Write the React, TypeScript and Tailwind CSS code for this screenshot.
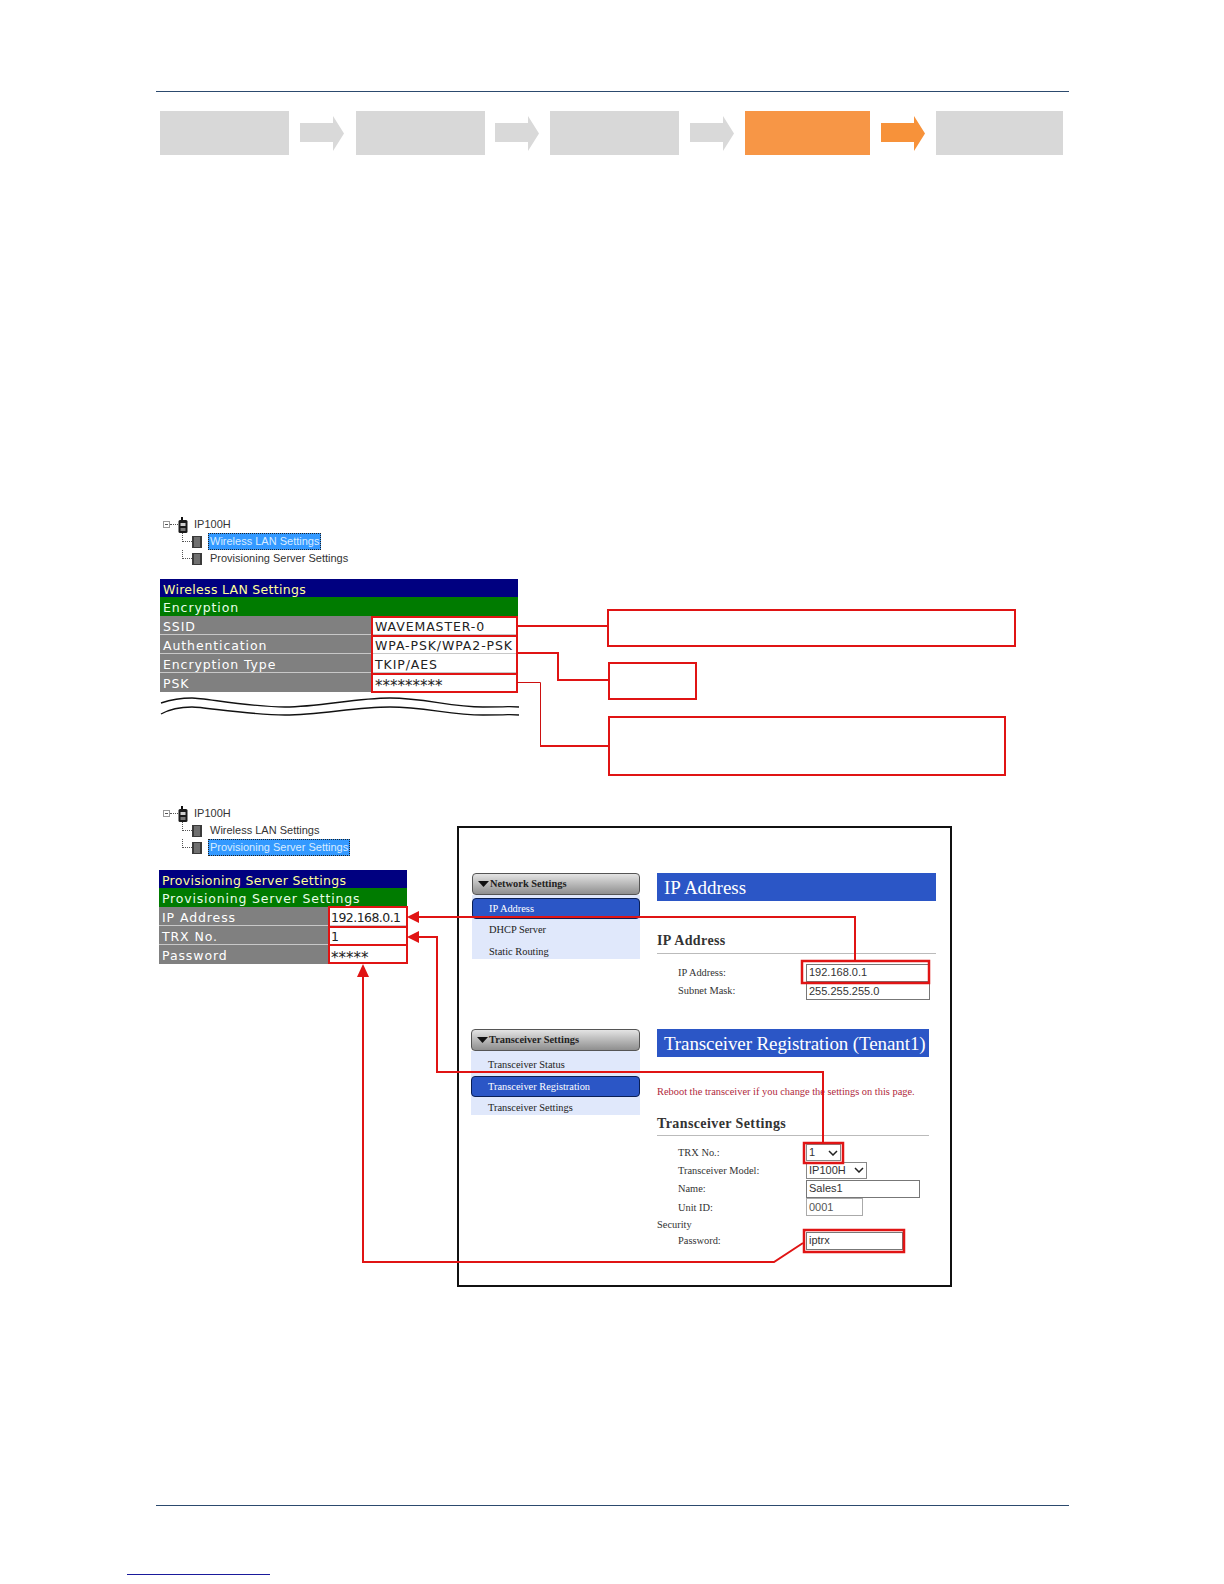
import React from "react";

const serif = "font-['Liberation_Serif',serif]";
const sans = "font-['Liberation_Sans',sans-serif]";

function StepArrow({ color }: { color: string }) {
  return (
    <svg width="44" height="35" viewBox="0 0 44 35" className="shrink-0">
      <path d="M0 7H33V0L44 17.5L33 35V26H0Z" fill={color} />
    </svg>
  );
}

function Radio() {
  return (
    <svg width="10" height="16" viewBox="0 0 10 16" className="shrink-0">
      <rect x="3" y="0" width="2" height="4" fill="#111" />
      <rect x="0.5" y="3" width="9" height="13" rx="1.5" fill="#1a1a1a" />
      <rect x="2.5" y="6" width="5" height="3" fill="#cfcfcf" />
      <rect x="2.5" y="11" width="5" height="3" fill="#777" />
    </svg>
  );
}

function Doc() {
  return (
    <svg width="10" height="12" viewBox="0 0 10 12" className="shrink-0">
      <rect width="10" height="12" fill="#3a3a3a" />
      <path d="M2 2H8M2 4H8M2 6H8M2 8H8M2 10H8" stroke="#a5a5a5" strokeWidth="1" />
    </svg>
  );
}

function TreeRow({ label, selected }: { label: string; selected: boolean }) {
  return (
    <div className="flex h-[17px] items-center pl-[23px]">
      <div className="h-[9px] w-[10px] self-start border-b border-l border-dotted border-[#555]" />
      <Doc />
      <span
        className={
          selected
            ? "ml-[6px] flex h-[17px] items-center border border-dotted border-[#222] bg-[#3399ff] px-[1px] text-[#d8ecff]"
            : "ml-[8px] text-[#333]"
        }
      >
        {label}
      </span>
    </div>
  );
}

function Tree({ selected }: { selected: 0 | 1 }) {
  return (
    <div className={`${sans} text-[11px] leading-none`}>
      <div className="flex h-[17px] items-center pl-[4px]">
        <div className="flex h-[7px] w-[7px] items-center justify-center border border-[#999]">
          <div className="h-px w-[3px] bg-[#555]" />
        </div>
        <div className="h-0 w-[8px] border-t border-dotted border-[#555]" />
        <Radio />
        <span className="ml-[6px] text-[#333]">IP100H</span>
      </div>
      <TreeRow label="Wireless LAN Settings" selected={selected === 0} />
      <TreeRow label="Provisioning Server Settings" selected={selected === 1} />
    </div>
  );
}

type Row = { label: string; value: string };

function DeviceTable({
  title,
  group,
  rows,
  width,
  labelWidth,
  valueTracking,
  groupTracking,
}: {
  title: string;
  group: string;
  rows: Row[];
  width: string;
  labelWidth: string;
  valueTracking: string;
  groupTracking: string;
}) {
  return (
    <div className={`${width} font-['DejaVu_Sans',sans-serif] text-[12.5px] leading-none`}>
      <div className="flex h-[18px] items-center bg-[#000080] pt-[4px] pl-[3px] font-medium tracking-[0.3px] text-[#ffff99]">
        {title}
      </div>
      <div className={`flex h-[19px] items-center bg-[#007b00] pt-[4px] pl-[3px] ${groupTracking} text-[#e8ffe8]`}>
        {group}
      </div>
      {rows.map((r) => (
        <div key={r.label} className="flex h-[19px] border-b border-[#c8c8c8] last:border-b-0">
          <div className={`flex ${labelWidth} items-center bg-[#808080] pt-[4px] pl-[3px] tracking-[0.9px] text-white`}>
            {r.label}
          </div>
          {r.value.startsWith("*") ? (
            <div className="flex flex-1 items-center bg-white pt-[8px] pl-[3px] text-[15px] text-[#222]">{r.value}</div>
          ) : (
            <div className={`flex flex-1 items-center bg-white pt-[4px] pl-[3px] ${valueTracking} text-[#222]`}>{r.value}</div>
          )}
        </div>
      ))}
    </div>
  );
}

function Callout({ className }: { className: string }) {
  return <div className={`border-2 border-[#e01414] ${className}`} />;
}

function SideHeader({ label }: { label: string }) {
  return (
    <div className="flex h-[22px] items-center rounded-[4px] border border-[#555] bg-gradient-to-b from-[#e4e4e4] to-[#8f8f8f] pl-[5px] text-[10.4px] font-bold text-[#222]">
      <svg width="11" height="6" viewBox="0 0 11 6" className="mr-[1px]">
        <path d="M0 0H11L5.5 6Z" fill="#111" />
      </svg>
      {label}
    </div>
  );
}

function SideMenu({ items, active }: { items: string[]; active: number }) {
  return (
    <div className="flex flex-col bg-[#e0e8fb] pt-[3px] text-[10.4px] leading-[12px] text-[#222]">
      {items.map((it, i) => (
        <div
          key={it}
          className={
            i === active
              ? "flex h-[21px] items-center rounded-[4px] border border-[#0a1f55] bg-[#2b56c6] pl-[16px] text-white"
              : "h-[22px] pt-[5px] pl-[17px] last:h-[18px]"
          }
        >
          {it}
        </div>
      ))}
    </div>
  );
}

function Title({ text, className }: { text: string; className: string }) {
  return (
    <div className={`flex h-[28px] items-center whitespace-nowrap bg-[#2b56c6] pl-[7px] text-[19px] leading-none text-white ${className}`}>
      {text}
    </div>
  );
}

function SectionHead({ text, className }: { text: string; className: string }) {
  return (
    <div className={`border-b border-[#bbb] pb-[5px] text-[14px] leading-none font-bold tracking-[0.4px] text-[#333] ${className}`}>
      {text}
    </div>
  );
}

function FormRow({ label, h, children }: { label: string; h: string; children: React.ReactNode }) {
  return (
    <div className={`flex ${h} items-center`}>
      <div className="w-[149px] pl-[21px] text-[10.4px] text-[#333]">{label}</div>
      {children}
    </div>
  );
}

function Field({ value, w, gray, dark }: { value: string; w: string; gray?: boolean; dark?: boolean }) {
  return (
    <div
      className={`flex h-[18px] ${w} shrink-0 items-center border ${gray ? "border-[#aaa] text-[#555]" : "border-[#777] text-[#333]"} ${dark ? "text-[#111]" : ""} pl-[2px] ${sans} text-[11px] leading-none`}
    >
      {value}
    </div>
  );
}

function SelectBox({ value, w }: { value: string; w: string }) {
  return (
    <div className={`flex h-[17px] ${w} shrink-0 items-center justify-between border border-[#888] pr-[2px] pl-[2px] ${sans} text-[11px] leading-none text-[#333]`}>
      {value}
      <svg width="10" height="6" viewBox="0 0 10 6">
        <path d="M1 1L5 5L9 1" fill="none" stroke="#222" strokeWidth="1.5" />
      </svg>
    </div>
  );
}

function AdminPanel() {
  return (
    <div className={`h-[461px] w-[495px] border-2 border-[#111] pt-[45px] pl-[13px] ${serif}`}>
      <div className="flex h-[156px] gap-[17px]">
        <div className="w-[168px]">
          <SideHeader label="Network Settings" />
          <SideMenu items={["IP Address", "DHCP Server", "Static Routing"]} active={0} />
        </div>
        <div className="w-[279px]">
          <Title text="IP Address" className="w-[279px]" />
          <SectionHead text="IP Address" className="mt-[33px]" />
          <div className="mt-[9px]">
            <FormRow label="IP Address:" h="h-[19px]">
              <Field value="192.168.0.1" w="w-[124px]" dark />
            </FormRow>
            <FormRow label="Subnet Mask:" h="h-[18px]">
              <Field value="255.255.255.0" w="w-[124px]" />
            </FormRow>
          </div>
        </div>
      </div>
      <div className="flex gap-[17px]">
        <div className="-ml-px w-[169px]">
          <SideHeader label="Transceiver Settings" />
          <SideMenu items={["Transceiver Status", "Transceiver Registration", "Transceiver Settings"]} active={1} />
        </div>
        <div className="w-[279px]">
          <Title text="Transceiver Registration (Tenant1)" className="w-[272px] tracking-[-0.1px]" />
          <div className="mt-[30px] whitespace-nowrap text-[10.4px] leading-none text-[#b0283c]">
            Reboot the transceiver if you change the settings on this page.
          </div>
          <SectionHead text="Transceiver Settings" className="mt-[20px] w-[272px] !pb-[4px]" />
          <div className="mt-[8px]">
            <FormRow label="TRX No.:" h="h-[17px]">
              <SelectBox value="1" w="w-[35px]" />
            </FormRow>
            <FormRow label="Transceiver Model:" h="h-[18px]">
              <SelectBox value="IP100H" w="w-[61px]" />
            </FormRow>
            <FormRow label="Name:" h="h-[19px]">
              <Field value="Sales1" w="w-[114px]" />
            </FormRow>
            <FormRow label="Unit ID:" h="h-[18px]">
              <Field value="0001" w="w-[57px]" gray />
            </FormRow>
            <div className="flex h-[16px] items-center text-[10.4px] text-[#333]">Security</div>
            <FormRow label="Password:" h="h-[17px]">
              <Field value="iptrx" w="w-[97px]" dark />
            </FormRow>
          </div>
        </div>
      </div>
    </div>
  );
}

function Wave() {
  return (
    <svg width="360" height="22" viewBox="0 0 360 22" className="mt-[5px] block">
      <path d="M1 6C10 3 20 1 32 1S90 10 125 10S195 1 230 1S290 10 323 10S345 9 359 10" fill="none" stroke="#111" strokeWidth="1.4" />
      <path d="M1 17C10 12 20 10 32 10S90 18 125 18S195 10 230 10S290 18 323 18S345 17 359 18" fill="none" stroke="#111" strokeWidth="1.4" />
    </svg>
  );
}

function Annotations() {
  const r = "#e01414";
  return (
    <svg width="1224" height="1584" viewBox="0 0 1224 1584" className="pointer-events-none absolute top-0 left-0">
      <g fill="none" stroke={r} strokeWidth="2">
        <rect x="372" y="617" width="145" height="19" />
        <rect x="372" y="636" width="145" height="38" />
        <rect x="372" y="674" width="145" height="18" />
        <path d="M517 626H607" />
        <path d="M517 653H558V680H608" />
        <path d="M517 682.5H540.5V746" strokeWidth="1" stroke="#cc1010" />
        <path d="M540 746H608" />
        <rect x="329" y="907" width="78" height="20" />
        <rect x="329" y="927" width="78" height="18" />
        <rect x="329" y="945" width="78" height="18" />
        <path d="M416 917H855V960" />
        <path d="M416 937H437V1072H823V1142" />
        <path d="M363 975V1262H774L803 1243" />
      </g>
      <g fill="none" stroke={r} strokeWidth="2.5">
        <rect x="802" y="961" width="127" height="22" />
        <rect x="804" y="1143" width="39" height="20" />
        <rect x="804" y="1230" width="100" height="22" />
      </g>
      <g fill={r}>
        <path d="M407 917L419 911V923Z" />
        <path d="M407 937L419 931V943Z" />
        <path d="M363 964L357 977H369Z" />
      </g>
    </svg>
  );
}

export default function App() {
  return (
    <div className="relative h-[1584px] w-[1224px] overflow-hidden bg-white">
      <div className="pt-[91px] pl-[156px]">
        <div className="h-px w-[913px] bg-[#2c4a6e]" />
      </div>

      <div className="mt-[19px] ml-[160px] flex h-[44px] w-[904px] items-center">
        <div className="h-[44px] w-[129px] bg-[#d8d8d8]" />
        <div className="ml-[11px] mr-[12px]"><StepArrow color="#d9d9d9" /></div>
        <div className="h-[44px] w-[129px] bg-[#d8d8d8]" />
        <div className="ml-[10px] mr-[11px]"><StepArrow color="#d9d9d9" /></div>
        <div className="h-[44px] w-[129px] bg-[#d8d8d8]" />
        <div className="mx-[11px]"><StepArrow color="#d9d9d9" /></div>
        <div className="h-[44px] w-[125px] bg-[#f79646]" />
        <div className="ml-[11px] mr-[11px]"><StepArrow color="#f7923a" /></div>
        <div className="h-[44px] w-[127px] bg-[#d8d8d8]" />
      </div>

      <div className="mt-[361px] flex pl-[159px]">
        <div className="w-[359px]">
          <Tree selected={0} />
          <div className="mt-[12px] pl-[1px]">
            <DeviceTable
              title="Wireless LAN Settings"
              group="Encryption"
              width="w-[358px]"
              labelWidth="w-[212px]"
              valueTracking="tracking-[0.9px]"
              groupTracking="tracking-[0.9px]"
              rows={[
                { label: "SSID", value: "WAVEMASTER-0" },
                { label: "Authentication", value: "WPA-PSK/WPA2-PSK" },
                { label: "Encryption Type", value: "TKIP/AES" },
                { label: "PSK", value: "*********" },
              ]}
            />
            <Wave />
          </div>
        </div>
        <div className="mt-[93px] ml-[89px] flex flex-col">
          <Callout className="h-[38px] w-[409px]" />
          <Callout className="mt-[15px] ml-[1px] h-[38px] w-[89px]" />
          <Callout className="mt-[16px] ml-[1px] h-[60px] w-[398px]" />
        </div>
      </div>

      <div className="mt-[29px] flex pl-[159px]">
        <div className="w-[298px]">
          <Tree selected={1} />
          <div className="mt-[14px]">
            <DeviceTable
              title="Provisioning Server Settings"
              group="Provisioning Server Settings"
              width="w-[248px]"
              labelWidth="w-[169px]"
              valueTracking="tracking-[-0.55px]"
              groupTracking="tracking-[0.8px]"
              rows={[
                { label: "IP Address", value: "192.168.0.1" },
                { label: "TRX No.", value: "1" },
                { label: "Password", value: "*****" },
              ]}
            />
          </div>
        </div>
        <div className="mt-[21px]">
          <AdminPanel />
        </div>
      </div>

      <div className="mt-[218px] pl-[156px]">
        <div className="h-px w-[913px] bg-[#2c4a6e]" />
      </div>
      <div className="mt-[68px] pl-[127px]">
        <div className="h-px w-[143px] bg-[#1a1a9c]" />
      </div>

      <Annotations />
    </div>
  );
}
